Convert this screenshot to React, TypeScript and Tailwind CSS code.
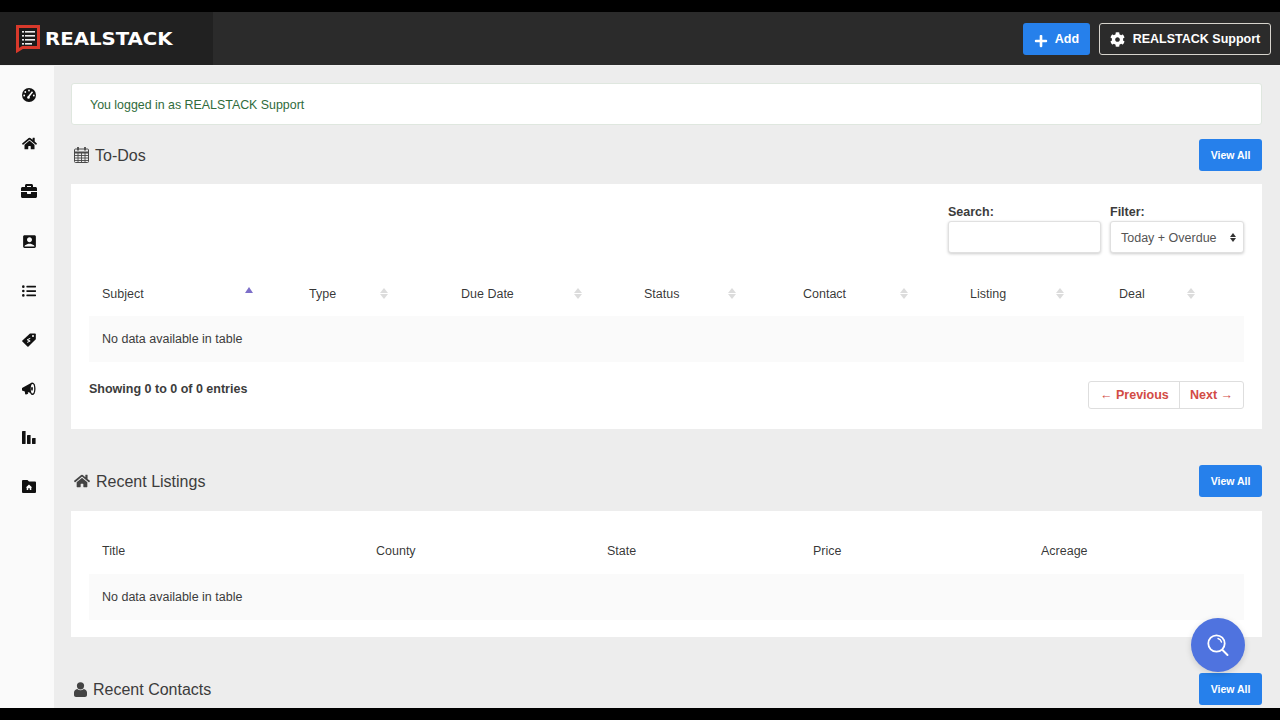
import { ReactNode } from 'react';
import { FaBriefcase, FaCog, FaHome, FaListUl, FaPlus } from 'react-icons/fa';
import { MdAccountBox } from 'react-icons/md';

function Logo() {
    return (
        <svg width="25" height="29" viewBox="0 0 25 29">
            <path d="M1.500 1.500h21v21H6.500l-5 3z" fill="#1c1c1c" stroke="#d8392b" strokeWidth="3" />
            <rect x="6" y="6" width="2" height="1.600" fill="#eee" />
            <rect x="9" y="6" width="10" height="1.600" fill="#eee" />
            <rect x="6" y="10" width="2" height="1.600" fill="#eee" />
            <rect x="9" y="10" width="10" height="1.600" fill="#eee" />
            <rect x="6" y="14" width="2" height="1.600" fill="#eee" />
            <rect x="9" y="14" width="10" height="1.600" fill="#eee" />
            <rect x="6" y="18" width="2" height="1.600" fill="#eee" />
            <rect x="9" y="18" width="7" height="1.600" fill="#eee" />
        </svg>
    );
}

function GaugeIcon() {
    return (
        <svg width="14" height="14" viewBox="0 0 14 14">
            <circle cx="7" cy="7" r="7" fill="#111" />
            <circle cx="7" cy="2.500" r="0.900" fill="#fff" />
            <circle cx="3.300" cy="4" r="0.900" fill="#fff" />
            <circle cx="2.200" cy="7.500" r="0.900" fill="#fff" />
            <circle cx="11.800" cy="7.500" r="0.900" fill="#fff" />
            <path d="M6 9.500L10.500 3.800" stroke="#fff" strokeWidth="1.500" />
            <circle cx="6.500" cy="9.500" r="1.300" fill="#fff" />
        </svg>
    );
}

function TagIcon() {
    return (
        <svg width="14" height="14" viewBox="0 0 14 14">
            <path d="M8 0.500h5a0.800 0.800 0 0 1 0.800 0.800v5L6.500 13.600a0.800 0.800 0 0 1-1.100 0L0.400 8.600a0.800 0.800 0 0 1 0-1.100z" fill="#111" />
            <circle cx="11" cy="3" r="1" fill="#fff" />
            <path d="M8.300 5.300L5.200 6.800l3 1.200-3 1.400" fill="none" stroke="#fff" strokeWidth="1" />
        </svg>
    );
}

function HornIcon() {
    return (
        <svg width="14" height="14" viewBox="0 0 14 14">
            <path d="M10 0.500L0 6v2.500l2.800 0.900 0.300 2.400a0.800 0.800 0 0 0 1 0.600l1.500-0.400a0.800 0.800 0 0 0 0.500-1l-0.400-1 4.300 1.500z" fill="#111" />
            <ellipse cx="10.500" cy="6.800" rx="3" ry="6.300" fill="#111" />
            <ellipse cx="10.500" cy="6.800" rx="1.700" ry="4.800" fill="#fff" />
            <ellipse cx="10" cy="6.800" rx="0.900" ry="2" fill="#111" />
        </svg>
    );
}

function BarsIcon() {
    return (
        <svg width="14" height="13" viewBox="0 0 14 13" fill="#111">
            <rect x="0" y="0" width="3.600" height="13" rx="0.400" />
            <rect x="5" y="4" width="3.600" height="9" rx="0.400" />
            <rect x="10" y="7" width="3.600" height="6" rx="0.400" />
        </svg>
    );
}

function FolderHomeIcon() {
    return (
        <svg width="14" height="13" viewBox="0 0 14 13">
            <path d="M1 0h4.500l1.500 1.500h6a1 1 0 0 1 1 1V12a1 1 0 0 1-1 1H1a1 1 0 0 1-1-1V1a1 1 0 0 1 1-1z" fill="#111" />
            <path d="M7 4.500l3.200 2.900H9.300V10H7.800V8.300H6.200V10H4.700V7.400H3.800z" fill="#fff" />
        </svg>
    );
}

function CalendarIcon() {
    return (
        <svg width="15" height="16" viewBox="0 0 15 16" fill="none" stroke="#4a4a4a">
            <rect x="0.500" y="2" width="14" height="13.500" rx="1" />
            <path d="M0.500 5.500h14" strokeWidth="2" />
            <path d="M0.500 8.500h14M0.500 11h14M0.500 13.500h14M4 5.500v10M7.500 5.500v10M11 5.500v10" strokeWidth="0.900" />
            <path d="M4 0v3.500M11 0v3.500" strokeWidth="1.800" />
        </svg>
    );
}

function UserIcon() {
    return (
        <svg width="13" height="15" viewBox="0 0 13 15" fill="#444">
            <circle cx="6.500" cy="3.800" r="3.600" />
            <path d="M0 13V10.500C0 8.500 1.500 7.500 3.200 7c1 .9 2.100 1.300 3.300 1.300S8.800 7.900 9.800 7C11.500 7.500 13 8.500 13 10.500V13c0 1.200-.8 2-2 2H2c-1.200 0-2-.8-2-2z" />
        </svg>
    );
}

function SearchIcon() {
    return (
        <svg width="24" height="24" viewBox="0 0 24 24" fill="none" stroke="#fff" strokeWidth="1.800" strokeLinecap="round">
            <circle cx="10.500" cy="10.500" r="8.200" />
            <path d="M16.500 17l5 5" strokeWidth="2" />
            <path d="M12 5.500a5 5 0 0 1 3.500 3.500" strokeWidth="1.400" />
        </svg>
    );
}

function SortArrows() {
    return (
        <span className="flex flex-col gap-[1px]">
            <span className="w-0 h-0 border-x-[4px] border-x-transparent border-b-[5px] border-b-[#dcdcdc]" />
            <span className="w-0 h-0 border-x-[4px] border-x-transparent border-t-[5px] border-t-[#dcdcdc]" />
        </span>
    );
}

function SectionHeader({ icon, title, gap }: { icon: ReactNode; title: string; gap: string }) {
    return (
        <div className="flex items-center justify-between h-8">
            <h2 className={`flex items-center ${gap} pl-[3px] text-[16px] text-[#3c3c3c]`}>
                {icon}
                <span className="pt-[2px]">{title}</span>
            </h2>
            <button className="w-[63px] h-8 pt-px rounded-[3px] bg-[#2680eb] text-white text-[10.500px] font-bold">View All</button>
        </div>
    );
}

const todoColumns = [
    { label: 'Subject', width: 'w-[207px]', text: 'w-[143px]', sorted: true },
    { label: 'Type', width: 'w-[152px]', text: 'w-[71px]', sorted: false },
    { label: 'Due Date', width: 'w-[183px]', text: 'w-[113px]', sorted: false },
    { label: 'Status', width: 'w-[159px]', text: 'w-[84px]', sorted: false },
    { label: 'Contact', width: 'w-[167px]', text: 'w-[97px]', sorted: false },
    { label: 'Listing', width: 'w-[149px]', text: 'w-[86px]', sorted: false },
    { label: 'Deal', width: 'w-[138px]', text: 'w-[68px]', sorted: false },
];

const listingColumns = [
    { label: 'Title', width: 'w-[274px]' },
    { label: 'County', width: 'w-[231px]' },
    { label: 'State', width: 'w-[206px]' },
    { label: 'Price', width: 'w-[228px]' },
    { label: 'Acreage', width: 'w-[203px]' },
];

const sidebarIcons = [
    { key: 'dash', icon: <GaugeIcon /> },
    { key: 'home', icon: <FaHome className="w-[15px] h-[15px]" /> },
    { key: 'deals', icon: <FaBriefcase className="w-4 h-4 mb-[3px]" /> },
    { key: 'contacts', icon: <MdAccountBox className="w-[17px] h-[17px]" /> },
    { key: 'lists', icon: <FaListUl className="w-[14px] h-[14px]" /> },
    { key: 'tags', icon: <TagIcon /> },
    { key: 'marketing', icon: <HornIcon /> },
    { key: 'reports', icon: <BarsIcon /> },
    { key: 'files', icon: <FolderHomeIcon /> },
];

export default function App() {
    return (
        <div className="relative flex flex-col w-[1280px] h-[720px] overflow-hidden bg-black font-['Liberation_Sans',Arial,sans-serif]">
            <div className="h-3 shrink-0 bg-black" />

            <header className="flex items-center justify-between h-[54px] shrink-0 bg-[#2b2b2b] border-b border-b-[#f2f2f2]">
                <div className="flex items-center gap-[4px] w-[213px] h-full pl-4 pt-[1px] bg-[#212121]">
                    <Logo />
                    <span className="font-['DejaVu_Sans',sans-serif] text-[17px] leading-none font-bold text-white origin-left scale-x-[1.16]">REALSTACK</span>
                </div>
                <div className="flex items-center gap-[9px] pr-[9px]">
                    <button className="flex items-center justify-center gap-[7px] w-[67px] h-8 pt-[2px] rounded-[3px] bg-[#2680eb] text-white text-[12.500px] font-bold">
                        <FaPlus className="w-[14px] h-[14px] mt-[2px]" />
                        Add
                    </button>
                    <button className="flex items-center justify-center gap-[8px] w-[172px] h-8 pt-[2px] rounded-[3px] border border-[#d6d3cc] bg-[#2b2b2b] text-white text-[12.500px] font-bold">
                        <FaCog className="w-[15px] h-[15px]" />
                        REALSTACK Support
                    </button>
                </div>
            </header>

            <div className="flex flex-1 min-h-0">
                <aside className="flex flex-col items-center gap-[32px] w-[54px] shrink-0 pl-1 pt-[20px] bg-[#fafafa]">
                    {sidebarIcons.map((item) => (
                        <div key={item.key} className="flex items-center justify-center h-[17px] text-[#111]">
                            {item.icon}
                        </div>
                    ))}
                </aside>

                <main className="flex-1 min-w-0 pl-[17px] pr-[18px] pt-[17px] bg-[#ededed] text-[#3c3c3c] text-[12.500px]">
                    <div className="flex items-center h-[42px] pl-[18px] pt-[2px] rounded-[3px] border border-[#dfe7df] bg-white text-[12.400px] text-[#2f6b3c]">
                        You logged in as REALSTACK Support
                    </div>

                    <div className="mt-[14px]">
                        <SectionHeader icon={<CalendarIcon />} title="To-Dos" gap="gap-[6px]" />
                    </div>

                    <section className="h-[245px] mt-[13px] px-[18px] bg-white">
                        <div className="flex justify-end gap-[9px] pt-[20px]">
                            <label className="flex flex-col w-[153px]">
                                <span className="h-[17px] leading-4 font-bold">Search:</span>
                                <span className="h-8 rounded-[3px] border border-[#e0e0e0] bg-white shadow-[0_1px_3px_rgba(0,0,0,0.2)]" />
                            </label>
                            <label className="flex flex-col w-[134px]">
                                <span className="h-[17px] leading-4 font-bold">Filter:</span>
                                <span className="flex items-center justify-between h-8 pl-[10px] pr-[7px] rounded-[3px] border border-[#e0e0e0] bg-white shadow-[0_1px_3px_rgba(0,0,0,0.2)] text-[#555]">
                                    <span className="pt-[2px]">Today + Overdue</span>
                                    <span className="flex flex-col gap-[1px]">
                                        <span className="w-0 h-0 border-x-[3px] border-x-transparent border-b-[4px] border-b-[#333]" />
                                        <span className="w-0 h-0 border-x-[3px] border-x-transparent border-t-[4px] border-t-[#333]" />
                                    </span>
                                </span>
                            </label>
                        </div>

                        <div className="flex items-center h-[46px] mt-[17px]">
                            {todoColumns.map((col) => (
                                <div key={col.label} className={`flex items-center shrink-0 pl-[13px] ${col.width}`}>
                                    <span className={`shrink-0 pt-[2px] text-black/80 ${col.text}`}>{col.label}</span>
                                    {col.sorted ? (
                                        <span className="w-0 h-0 mb-[6px] border-x-[4px] border-x-transparent border-b-[6px] border-b-[#7d6fc9]" />
                                    ) : (
                                        <SortArrows />
                                    )}
                                </div>
                            ))}
                        </div>
                        <div className="flex items-center h-[46px] pl-[13px] bg-[#fafafa]">No data available in table</div>

                        <div className="flex items-start justify-between mt-[19px]">
                            <span className="leading-4 font-bold">Showing 0 to 0 of 0 entries</span>
                            <div className="flex h-[28px] rounded-[3px] border border-[#dedede] text-[#d24b45] font-bold">
                                <span className="flex items-center w-[91px] pl-[11px] pt-px border-r border-r-[#dedede]">← Previous</span>
                                <span className="flex items-center pl-[10px] pt-px w-[63px]">Next →</span>
                            </div>
                        </div>
                    </section>

                    <div className="mt-[36px]">
                        <SectionHeader icon={<FaHome className="w-[16px] h-[16px] text-[#444]" />} title="Recent Listings" gap="gap-[6px]" />
                    </div>

                    <section className="h-[126px] mt-[14px] px-[18px] pt-[17px] bg-white">
                        <div className="flex items-center h-[46px]">
                            {listingColumns.map((col) => (
                                <div key={col.label} className={`shrink-0 pl-[13px] pt-px text-black/80 ${col.width}`}>{col.label}</div>
                            ))}
                        </div>
                        <div className="flex items-center h-[46px] pl-[13px] bg-[#fafafa]">No data available in table</div>
                    </section>

                    <div className="mt-[36px]">
                        <SectionHeader icon={<UserIcon />} title="Recent Contacts" gap="gap-[6px]" />
                    </div>
                </main>
            </div>

            <div className="h-3 shrink-0 bg-black" />

            <button className="absolute left-[1191px] top-[618px] flex items-center justify-center w-[54px] h-[54px] rounded-full bg-[#4f73df] shadow-[0_2px_6px_rgba(0,0,0,0.15)]">
                <SearchIcon />
            </button>
        </div>
    );
}
